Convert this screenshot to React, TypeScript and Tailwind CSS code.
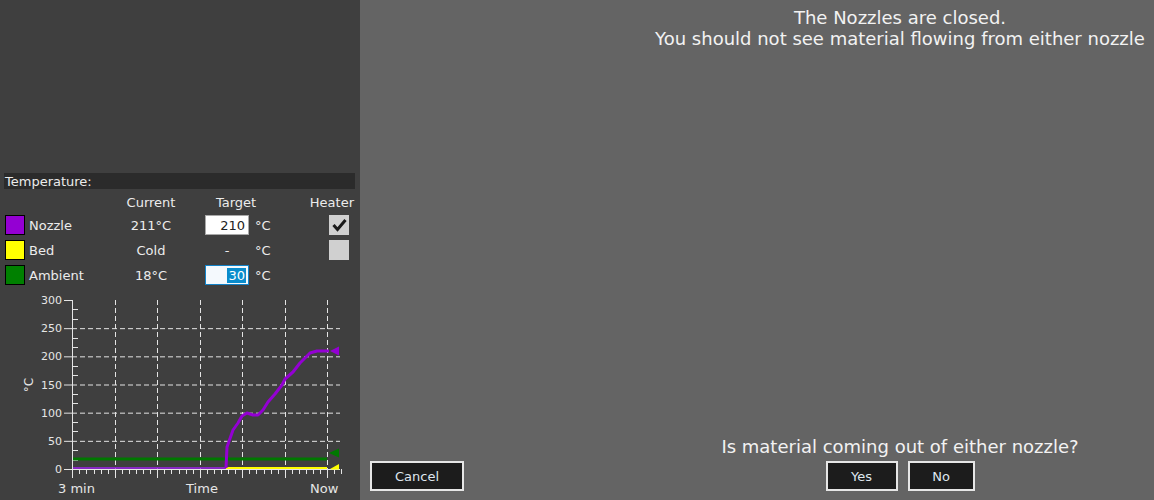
import React from "react";

const F = "font-['DejaVu_Sans',sans-serif]";

function Chart() {
  const x0 = 72;
  const x1 = 340;
  const yTop = 10;
  const y0 = 179;
  const step = (y0 - yTop) / 6;
  const vgrid = [115, 157, 200, 242, 285, 327];
  const majorX = [72, ...vgrid];
  const minorX: number[] = [];
  for (let i = 0; i < majorX.length - 1; i++) {
    const a = majorX[i];
    const b = majorX[i + 1];
    for (let k = 1; k < 6; k++) minorX.push(a + ((b - a) * k) / 6);
  }
  const dx = (majorX[1] - majorX[0]) / 6;
  minorX.push(327 + dx, 327 + 2 * dx);
  const minorY: number[] = [];
  for (let i = 0; i < 6; i++) {
    for (let k = 1; k < 3; k++) minorY.push(yTop + step * i + (step * k) / 3);
  }
  const purple =
    "226,178 227,157 233,140 238,133 242,126 247,123 253,125 258,125 263,120 268,112 275,104 282,95 285,89 293,82 300,73 310,63 317,61 329,61";
  return (
    <svg width="360" height="210" className="block">
      <defs>
        <clipPath id="plot">
          <rect x="72" y="0" width="290" height="179.5" />
        </clipPath>
      </defs>
      {[1, 2, 3, 4, 5].map((i) => (
        <line
          key={"h" + i}
          x1={x0}
          x2={x1}
          y1={yTop + step * i + 0.5}
          y2={yTop + step * i + 0.5}
          stroke="#e4e4e4"
          strokeWidth="1"
          strokeDasharray="5 3"
        />
      ))}
      {vgrid.map((x) => (
        <line
          key={"v" + x}
          x1={x + 0.5}
          x2={x + 0.5}
          y1={yTop}
          y2={y0}
          stroke="#e4e4e4"
          strokeWidth="1"
          strokeDasharray="5 3"
        />
      ))}
      <line x1={x0 + 0.5} x2={x0 + 0.5} y1={yTop} y2={y0 + 9} stroke="#e4e4e4" />
      <line x1={x0} x2={x1} y1={y0 + 0.5} y2={y0 + 0.5} stroke="#e4e4e4" />
      {[0, 1, 2, 3, 4, 5, 6].map((i) => (
        <line
          key={"yt" + i}
          x1={64}
          x2={x0}
          y1={yTop + step * i + 0.5}
          y2={yTop + step * i + 0.5}
          stroke="#e4e4e4"
        />
      ))}
      {minorY.map((y, i) => (
        <line key={"ym" + i} x1={x0} x2={x0 + 6} y1={Math.round(y) + 0.5} y2={Math.round(y) + 0.5} stroke="#e4e4e4" />
      ))}
      {vgrid.map((x) => (
        <line key={"xt" + x} x1={x + 0.5} x2={x + 0.5} y1={y0} y2={y0 + 9} stroke="#e4e4e4" />
      ))}
      {minorX.map((x, i) => (
        <line
          key={"xm" + i}
          x1={Math.round(x) + 0.5}
          x2={Math.round(x) + 0.5}
          y1={y0}
          y2={y0 + 5}
          stroke="#e4e4e4"
        />
      ))}
      {[300, 250, 200, 150, 100, 50, 0].map((v, i) => (
        <text
          key={"yl" + v}
          x={62}
          y={yTop + step * i + 4}
          textAnchor="end"
          fontFamily="DejaVu Sans, sans-serif"
          fontSize="11"
          fill="#e6e6e6"
        >
          {v}
        </text>
      ))}
      <text
        x={0}
        y={0}
        transform="translate(33 95) rotate(-90)"
        textAnchor="middle"
        fontFamily="DejaVu Sans, sans-serif"
        fontSize="12"
        fill="#e6e6e6"
      >
        °C
      </text>
      <text x={58} y={203} fontFamily="DejaVu Sans, sans-serif" fontSize="13" fill="#e6e6e6">
        3 min
      </text>
      <text x={202} y={203} textAnchor="middle" fontFamily="DejaVu Sans, sans-serif" fontSize="13" fill="#e6e6e6">
        Time
      </text>
      <text x={310} y={203} fontFamily="DejaVu Sans, sans-serif" fontSize="13" fill="#e6e6e6">
        Now
      </text>
      <line x1={73} x2={226} y1={178} y2={178} stroke="#a020f0" strokeWidth="1.5" />
      <line x1={73} x2={327} y1={169} y2={169} stroke="#007800" strokeWidth="3" />
      <line x1={226} x2={327} y1={178} y2={178} stroke="#ffff00" strokeWidth="2" />
      <polyline points={purple} fill="none" stroke="#9400d3" strokeWidth="3" strokeLinejoin="round" />
      <polygon points="330,61 339,56.5 339,65.5" fill="#9400d3" />
      <polygon points="329,163 339,158.5 339,167.5" fill="#007800" />
      <g clipPath="url(#plot)">
        <polygon points="330,179 339,174 339,184" fill="#ffff00" />
      </g>
    </svg>
  );
}

function Swatch({ color }: { color: string }) {
  return <div className="w-[20px] h-[20px] border border-black" style={{ backgroundColor: color }} />;
}

function Row({
  color,
  label,
  current,
  target,
  checkbox,
}: {
  color: string;
  label: string;
  current: string;
  target: React.ReactNode;
  checkbox: React.ReactNode;
}) {
  return (
    <div className="flex items-start h-[20px] pl-[5px]">
      <Swatch color={color} />
      <div className="w-[86px] pl-[4px] pt-[2px] leading-[18px]">{label}</div>
      <div className="w-[80px] text-center pt-[2px] leading-[18px]">{current}</div>
      <div className="w-[14px]" />
      <div className="w-[44px] h-[20px]">{target}</div>
      <div className="w-[80px] pl-[6px] pt-[2px] leading-[18px]">°C</div>
      {checkbox}
    </div>
  );
}

export default function App() {
  return (
    <div className={`flex w-[1154px] h-[500px] overflow-hidden ${F} text-[13px]`}>
      <div className="w-[360px] h-[500px] bg-[#3f3f3f] text-[#ececec] flex flex-col">
        <div className="mt-[173px] ml-[4px] w-[351px] h-[16px] bg-[#2b2b2b] leading-[18px] pl-[1px]">
          Temperature:
        </div>
        <div className="flex h-[20px] mt-[3px] pt-[2px] leading-[18px]">
          <div className="w-[111px]" />
          <div className="w-[80px] text-center">Current</div>
          <div className="w-[14px]" />
          <div className="w-[62px] text-center">Target</div>
          <div className="flex-1 text-right pr-[6px]">Heater</div>
        </div>
        <div className="flex flex-col gap-[5px] mt-[3px]">
          <Row
            color="#9400d3"
            label="Nozzle"
            current="211°C"
            target={
              <div className="w-[44px] h-[20px] bg-white border border-[#a8a8a8] text-right pr-[3px] pt-[1px] leading-[18px] text-[#222]">
                210
              </div>
            }
            checkbox={
              <div className="w-[20px] h-[20px] bg-[#d0d0d0] flex items-center justify-center">
                <svg width="20" height="20" viewBox="0 0 20 20">
                  <path d="M4.5 10 L8.5 14.5 L16.5 5" fill="none" stroke="#1a1a1a" strokeWidth="3" />
                </svg>
              </div>
            }
          />
          <Row
            color="#ffff00"
            label="Bed"
            current="Cold"
            target={<div className="text-center w-[44px] pt-[2px] leading-[18px]">-</div>}
            checkbox={<div className="w-[20px] h-[20px] bg-[#d0d0d0]" />}
          />
          <Row
            color="#008000"
            label="Ambient"
            current="18°C"
            target={
              <div className="w-[44px] h-[20px] bg-[#f4f9fd] border border-[#1282c8] flex justify-end items-center pr-[2px] leading-[15px]">
                <span className="bg-[#0a8ccc] text-white px-[1px]">30</span>
              </div>
            }
            checkbox={<div className="w-[20px] h-[20px]" />}
          />
        </div>
        <div className="mt-[5px]">
          <Chart />
        </div>
      </div>
      <div className="flex-1 h-[500px] bg-[#646464] text-[#f2f2f2] flex flex-col">
        <div className="self-end w-[508px] text-center pt-[7px] text-[18px] leading-[21px]">
          <div>The Nozzles are closed.</div>
          <div className="whitespace-nowrap">You should not see material flowing from either nozzle</div>
        </div>
        <div className="flex-1" />
        <div className="flex items-end pb-[9px]">
          <button className="ml-[10px] w-[94px] h-[30px] bg-[#1c1c1c] border-2 border-[#e6e6e6] text-[#dfe6ee] text-[13px] leading-[27px]">
            Cancel
          </button>
          <div className="ml-auto w-[508px] flex flex-col items-center">
            <div className="text-[18px] leading-[22px] whitespace-nowrap">Is material coming out of either nozzle?</div>
            <div className="flex gap-[10px] mt-[3px]">
              <button className="w-[72px] h-[30px] bg-[#1c1c1c] border-2 border-[#e6e6e6] text-[#dfe6ee] text-[13px] leading-[27px]">
                Yes
              </button>
              <button className="w-[67px] h-[30px] bg-[#1c1c1c] border-2 border-[#e6e6e6] text-[#dfe6ee] text-[13px] leading-[27px]">
                No
              </button>
            </div>
          </div>
        </div>
      </div>
    </div>
  );
}
